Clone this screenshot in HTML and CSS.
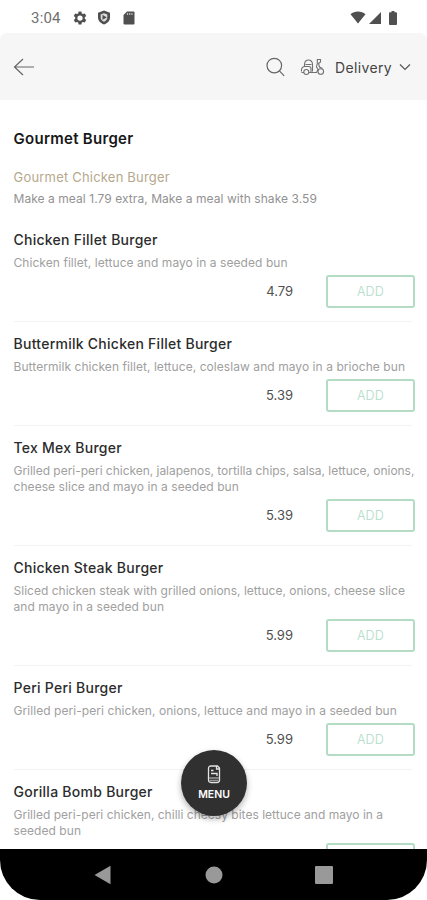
FILE: index.html
```html
<!DOCTYPE html>
<html lang="en">
<head>
<meta charset="utf-8">
<title>Gourmet Burger</title>
<link rel="stylesheet" href="styles.css">
</head>
<body>
<div class="screen">
  <div class="status">
    <span class="clock">3:04</span>
    <svg class="s-gear" width="14" height="14" viewBox="0 0 24 24"><path fill="#505050" fill-rule="evenodd" d="M9.5 1h5l.6 3.2 2 1.1 3.1-1.1 2.5 4.3-2.5 2.2v2.6l2.5 2.2-2.5 4.3-3.1-1.1-2 1.1-.6 3.2h-5l-.6-3.2-2-1.1-3.1 1.1-2.5-4.3 2.5-2.2v-2.6L1.300 8.500l2.500-4.300 3.100 1.100 2-1.100zM12 7.500a4.500 4.500 0 1 0 0 9 4.500 4.500 0 0 0 0-9z"/></svg>
    <svg class="s-shield" width="14" height="15" viewBox="0 0 14 15"><path fill="#505050" d="M7 .5 13 2.700v4.500c0 3.400-2.400 6-6 7.300-3.600-1.300-6-3.900-6-7.300V2.700z"/><path fill="#ddd" d="M7 3.300 10.300 4.600v2.800c0 2-1.300 3.500-3.300 4.400-2-.9-3.300-2.400-3.300-4.400V4.600z"/><path fill="#505050" d="M5.500 4.800 9.800 7.400 5.500 9.800z"/></svg>
    <svg class="s-card" width="12" height="14" viewBox="0 0 12 14"><path fill="#505050" d="M4 .5h6.500q1 0 1 1v11q0 1-1 1h-9q-1 0-1-1V4z"/><path stroke="#bbb" stroke-width="1.200" d="M4.500 2v2M6.700 2v2M8.900 2v2"/></svg>
    <span class="spacer"></span>
    <svg class="s-wifi" width="16" height="13" viewBox="0 0 16 13"><path fill="#505050" d="M.5 3.200C4.500-.3 11.500-.3 15.500 3.200L8 12.500z"/></svg>
    <svg class="s-cell" width="12" height="12" viewBox="0 0 12 12"><path fill="#505050" d="M12 0v12H0z"/></svg>
    <svg class="s-batt" width="8" height="14" viewBox="0 0 8 14"><path fill="#505050" d="M2.500 0h3v1.300H7q1 0 1 1V13q0 1-1 1H1q-1 0-1-1V2.300q0-1 1-1h1.500z"/></svg>
  </div>
  <header class="bar">
    <svg width="22" height="20" viewBox="0 0 22 20" fill="none" stroke="#666" stroke-width="1.200"><path d="M21 10H1.500M10 2 1.500 10l8.500 8"/></svg>
    <span class="spacer"></span>
    <svg class="search" width="19" height="20" viewBox="0 0 19 20" fill="none" stroke="#666" stroke-width="1.200"><circle cx="8.300" cy="8.600" r="7.300"/><path d="m13.400 13.900 4.800 5"/></svg>
    <svg class="scooter" width="25" height="18" viewBox="0 0 25 18" fill="none" stroke="#707070" stroke-width="1.100"><path d="M4.500 8.500V6Q5 2 8.500 2T12.500 6v7.500M5.500 6.500h6M1.500 13.500Q1 9 4.500 8.500H9q2 0 2 2.500v3M1.500 14.500h2.500M9 14.500h7.500l1.500-3-1.500-2.500.8-3.500V1.500h3.200V4l-2 1.500 1 3.500 3 1.500"/><circle cx="6.300" cy="14" r="2.500"/><circle cx="20.800" cy="13.500" r="2.800"/></svg>
    <span class="mode">Delivery</span>
    <svg width="12" height="8" viewBox="0 0 12 8" fill="none" stroke="#555" stroke-width="1.200"><path d="m1 1.500 5 5 5-5"/></svg>
  </header>
  <main class="content">
    <h1>Gourmet Burger</h1>
    <h2>Gourmet Chicken Burger</h2>
    <p class="note">Make a meal 1.79 extra, Make a meal with shake 3.59</p>
    <section class="item"><h3>Chicken Fillet Burger</h3><p>Chicken fillet, lettuce and mayo in a seeded bun</p><div class="buy"><span>4.79</span><button>ADD</button></div></section>
    <section class="item"><h3>Buttermilk Chicken Fillet Burger</h3><p>Buttermilk chicken fillet, lettuce, coleslaw and mayo in a brioche bun</p><div class="buy"><span>5.39</span><button>ADD</button></div></section>
    <section class="item"><h3>Tex Mex Burger</h3><p><span class="tight">Grilled peri-peri chicken, jalapenos, tortilla chips, salsa, lettuce, onions,</span><br>cheese slice and mayo in a seeded bun</p><div class="buy"><span>5.39</span><button>ADD</button></div></section>
    <section class="item"><h3>Chicken Steak Burger</h3><p><span class="even">Sliced chicken steak with grilled onions, lettuce, onions, cheese slice</span><br>and mayo in a seeded bun</p><div class="buy"><span>5.99</span><button>ADD</button></div></section>
    <section class="item"><h3>Peri Peri Burger</h3><p>Grilled peri-peri chicken, onions, lettuce and mayo in a seeded bun</p><div class="buy"><span>5.99</span><button>ADD</button></div></section>
    <section class="item"><h3>Gorilla Bomb Burger</h3><p><span class="even">Grilled peri-peri chicken, chilli cheesy bites lettuce and mayo in a</span><br>seeded bun</p><div class="buy"><button></button></div></section>
  </main>
  <nav class="nav">
    <svg width="17" height="20" viewBox="0 0 17 20"><path fill="#999" d="M16.500.8v18.400L.5 10z"/></svg>
    <svg width="18" height="18" viewBox="0 0 18 18"><circle cx="9" cy="9" r="8.500" fill="#999"/></svg>
    <svg width="18" height="18" viewBox="0 0 18 18"><rect width="18" height="18" rx="1" fill="#999"/></svg>
  </nav>
  <div class="fab">
    <svg width="14" height="19" viewBox="0 0 14 19" fill="none" stroke="#e4e4e4" stroke-width="1.300"><path d="M4 1h6.500l2 2v12q0 2.500-2.500 2.500H4Q1.500 17.500 1.500 15V3.500Q1.500 1 4 1zM9.500 1v3h3M4 5.500h2.500M4 8.500h6v2.500"/><path stroke="#999" d="M2 13h10M2.500 15.300h9"/></svg>
    <span>MENU</span>
  </div>
</div>
</body>
</html>
```
FILE: styles.css
```css
* { box-sizing: border-box; }
body { margin: 0; background: #fff; font-family: Inter, "Liberation Sans", sans-serif; }
.screen { position: relative; display: flex; flex-direction: column; width: 427px; height: 900px; overflow: hidden; background: #fff; }
.status { display: flex; align-items: center; flex: none; height: 33px; padding: 2px 30px 0 31px; }
.clock { width: 42px; font: 15px/20px Roboto, sans-serif; letter-spacing: .2px; color: #707070; }
.spacer { flex: 1; }
.s-shield { margin-left: 10px; }
.s-card { margin-left: 12px; }
.s-cell { margin-left: 3px; }
.s-batt { margin-left: 8px; }
.bar { display: flex; align-items: center; flex: none; height: 67px; padding: 0 16px 0 13px; border-radius: 7px 7px 0 0; background: #f6f6f6; }
.search { margin-right: 15px; }
.scooter { margin-right: 10px; }
.mode { width: 64px; margin-top: 2px; font-size: 14px; line-height: 20px; letter-spacing: .35px; color: #444; white-space: nowrap; }
.content { flex: 1; min-height: 0; overflow: hidden; padding: 28px 15px 0 13.500px; }
h1, h2, h3, p { margin: 0; font-weight: 400; white-space: nowrap; }
h1 { font-size: 15px; line-height: 22px; font-weight: 600; letter-spacing: .28px; color: #181818; }
h2 { margin-top: 17px; font-size: 13px; line-height: 20px; letter-spacing: .2px; color: #b5a88c; }
.note, .item p { font-size: 12px; line-height: 16px; letter-spacing: .06px; color: #a0a0a0; }
.note { margin: 4px 0 11px; color: #929292; }
.item { padding: 12px 0 13px; border-bottom: 1px solid #f3f3f3; }
.item h3 { font-size: 14px; line-height: 20px; font-weight: 500; letter-spacing: .26px; color: #2c2c2c; }
.item p { margin-top: 4px; padding-top: 1px; }
.item p .tight { letter-spacing: -.03px; }
.item p .even { letter-spacing: .015px; }
.buy { display: flex; align-items: center; justify-content: flex-end; gap: 33px; margin: 4px -3px 0 0; }
.buy span { margin-top: -1px; font-size: 13px; color: #505050; }
button { width: 89px; height: 33px; padding: 0 0 1px; border: 2px solid #b4dcc5; border-radius: 3px; background: #fff; color: #b0dbc4; font: 300 12.500px Inter, sans-serif; letter-spacing: .2px; }
.nav { display: flex; align-items: center; justify-content: space-between; flex: none; height: 51px; padding: 0 94px 0 94px; border-radius: 0 0 40px 40px; background: #000; }
.nav svg:nth-child(2) { margin-left: 1px; }
.fab { position: absolute; left: 181px; top: 750px; display: flex; flex-direction: column; align-items: center; width: 66px; height: 66px; padding-top: 15px; border-radius: 50%; background: #303030; color: #fff; box-shadow: 0 3px 6px rgba(0,0,0,.3); }
.fab span { margin-top: 4px; font-size: 10.500px; line-height: 14px; font-weight: 600; }
```
